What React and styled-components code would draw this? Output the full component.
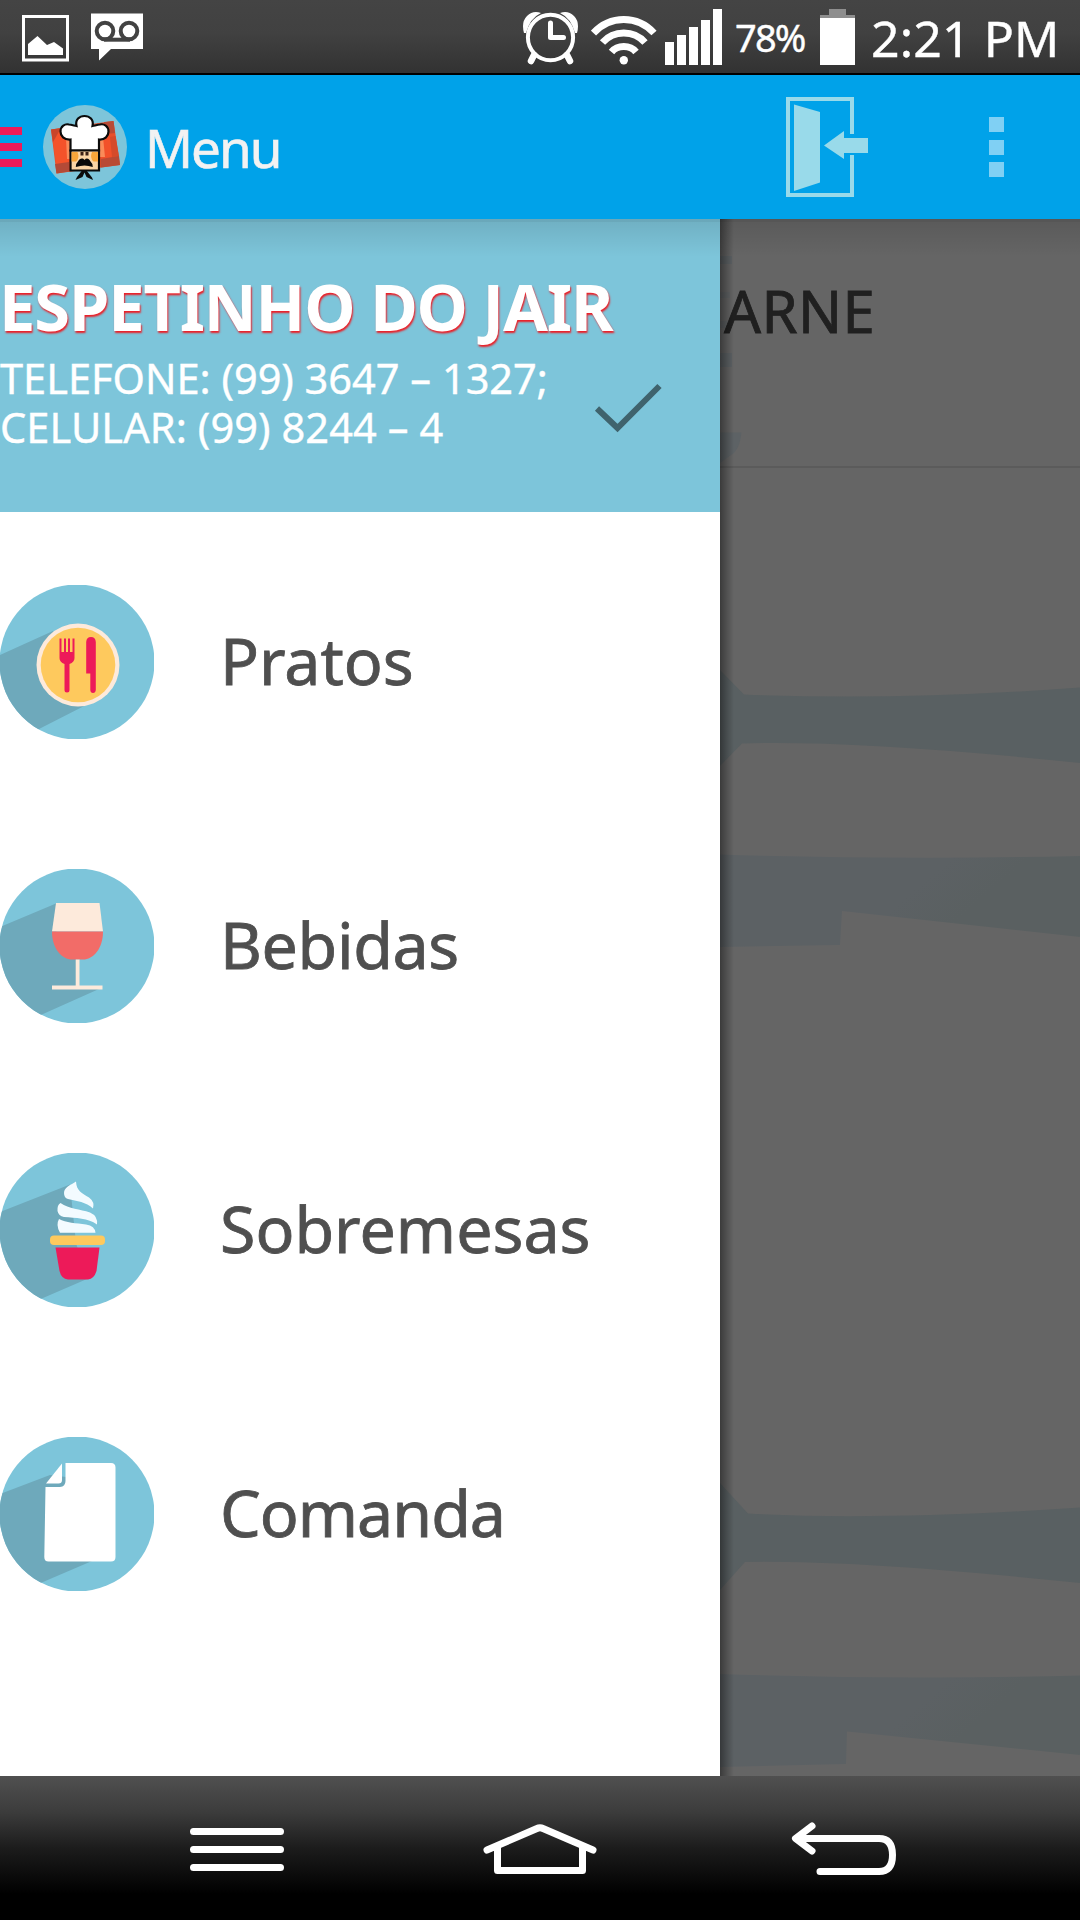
import React from "react";
import styled, { createGlobalStyle } from "styled-components";

const Global = createGlobalStyle`
  *, *::before, *::after { box-sizing: border-box; }
  body { margin: 0; background: #000; }
  svg { display: block; flex: none; }
`;

const Screen = styled.div`
  width: 1080px;
  height: 1920px;
  display: flex;
  flex-direction: column;
  overflow: hidden;
  font-family: "Noto Sans", "Open Sans", sans-serif;
`;

const StatusBar = styled.header`
  height: 75px;
  flex: none;
  display: flex;
  justify-content: space-between;
  padding: 0 22px;
  background: linear-gradient(#444 0%, #414141 45%, #323232 100%);
  border-bottom: 2px solid #000;
`;

const StatusGroup = styled.div`
  display: flex;
  align-items: flex-start;
`;

const StatusText = styled.span`
  font-size: ${(p) => p.$size}px;
  line-height: 60px;
  letter-spacing: ${(p) => p.$spacing}px;
  width: ${(p) => p.$width}px;
  padding-top: ${(p) => p.$top}px;
  margin-left: ${(p) => p.$left}px;
  white-space: nowrap;
  color: #fff;
  -webkit-text-stroke: 0.4px currentColor;
`;

const AppBar = styled.div`
  height: 144px;
  flex: none;
  display: flex;
  align-items: center;
  background: #00a2e9;
`;

const DrawerToggle = styled.div`
  display: grid;
  gap: 8px;
  width: 22px;
  margin-right: 21px;
`;

const ToggleLine = styled.span`
  height: 8px;
  background: #ed1a59;
`;

const AppTitle = styled.h1`
  flex: 1;
  margin: 0 0 0 18px;
  padding-top: 1px;
  font-size: 53px;
  line-height: 72px;
  font-weight: 400;
  letter-spacing: -2px;
  color: #f2f2f2;
  -webkit-text-stroke: 0.6px currentColor;
`;

const Overflow = styled.div`
  display: grid;
  gap: 7.5px;
  margin: 0 76px 0 121px;
`;

const OverflowDot = styled.span`
  width: 15px;
  height: 15px;
  background: #80d0f4;
`;

const Body = styled.main`
  height: 1557px;
  flex: none;
  display: grid;
  grid-template-columns: 720px 360px;
  position: relative;
`;

const BarShadow = styled.div`
  position: absolute;
  inset: 0 0 auto 0;
  height: 38px;
  background: linear-gradient(rgba(0, 0, 0, 0.15) 0 3px, rgba(0, 0, 0, 0.1) 3px, rgba(0, 0, 0, 0));
`;

const Drawer = styled.nav`
  background: #fff;
`;

const Account = styled.section`
  height: 293px;
  display: flex;
  background: #7dc5da;
`;

const AccountText = styled.div`
  width: 594px;
  padding-top: 45px;
  white-space: nowrap;
  color: #fff;
`;

const AccountName = styled.h2`
  margin: 0 0 0 -1px;
  font-size: 65px;
  line-height: 84px;
  font-weight: 700;
  letter-spacing: -1.15px;
  text-shadow: 1px 2px 2px #ee1c24;
`;

const Phone = styled.p`
  margin: 0;
  font-size: 41.5px;
  line-height: 49px;
  letter-spacing: ${(p) => p.$spacing}px;
  -webkit-text-stroke: 0.4px currentColor;
`;

const PhoneList = styled.div`
  padding-top: 6px;
`;

const CheckSlot = styled.div`
  padding-top: 161px;
`;

const Items = styled.div`
  display: grid;
  gap: 130px;
  padding-top: 73px;
`;

const Item = styled.div`
  height: 154px;
  display: flex;
  align-items: center;
  gap: 66px;
`;

const ItemLabel = styled.span`
  padding-bottom: 5px;
  font-size: 64.5px;
  line-height: 88px;
  letter-spacing: ${(p) => p.$spacing}px;
  color: #4f4f4f;
  -webkit-text-stroke: 0.8px currentColor;
`;

const DimPage = styled.section`
  position: relative;
  overflow: hidden;
  background: #656565;
`;

const Watermark = styled.svg`
  position: absolute;
  inset: 0;
`;

const PageHeading = styled.div`
  position: relative;
  height: 249px;
  padding: 50px 0 0 4px;
  border-bottom: 2px solid #5b5b5b;
  font-size: 58px;
  line-height: 84px;
  letter-spacing: 0.4px;
  color: #202020;
  -webkit-text-stroke: 0.8px currentColor;
`;

const DrawerShadow = styled.div`
  position: absolute;
  inset: 0 auto 0 0;
  width: 14px;
  background: linear-gradient(90deg, rgba(0, 0, 0, 0.42), rgba(0, 0, 0, 0.2) 50%, rgba(0, 0, 0, 0));
`;

const NavBar = styled.footer`
  height: 144px;
  flex: none;
  display: flex;
  align-items: flex-start;
  gap: 190px;
  padding: 44px 0 0 184px;
  background: linear-gradient(#505050 0%, #3c3c3c 25%, #1c1c1c 50%, #000 82%);
`;

const PhotoIcon = () => (
  <svg width="47" height="73" viewBox="22 0 47 73">
    <rect x="23.5" y="16.5" width="44" height="43.5" fill="none" stroke="#fff" strokeWidth="3" />
    <path d="M28 44L37.5 36L47 45L54 42L63 48.5V55H28Z" fill="#fff" />
  </svg>
);

const SpacedSvg = styled.svg`
  margin-left: ${(p) => p.$left}px;
`;

const VoicemailIcon = () => (
  <SpacedSvg $left={22} width="52" height="73" viewBox="91 0 52 73">
    <path d="M91 13.5H143V49H111L99 60.5V49H91Z" fill="#fff" />
    <g fill="none" stroke="#424242" strokeWidth="4">
      <circle cx="105" cy="31" r="8.3" />
      <circle cx="129" cy="31" r="8.3" />
      <path d="M104 39.7H130" />
    </g>
  </SpacedSvg>
);

const AlarmIcon = () => (
  <svg width="55" height="73" viewBox="523 0 55 73">
    <g fill="#fff">
      <path d="M524 33Q521 22 527 16Q533 10 541 13Q530 18 526 33Z" />
      <path d="M577 33Q580 22 574 16Q568 10 560 13Q571 18 575 33Z" />
    </g>
    <g fill="none" stroke="#fff" strokeLinecap="round">
      <ellipse cx="550.5" cy="37.5" rx="22.6" ry="22.8" strokeWidth="4" />
      <path d="M534 55L531 61M567 55L570 61" strokeWidth="6.5" />
      <path d="M550.5 23V37.5H563.5" strokeWidth="5" strokeLinejoin="round" />
    </g>
  </svg>
);

const WifiIcon = () => (
  <SpacedSvg $left={13} width="66" height="73" viewBox="591 0 66 73">
    <g fill="none" stroke="#fff" strokeWidth="7">
      <path d="M593.5 33Q606 19.5 623.8 19.5T654 33" />
      <path d="M602.5 42.5Q611 33 623.8 33T645 42.5" />
      <path d="M611.5 52Q616 46.5 623.8 46.5T636 52" />
    </g>
    <circle cx="623.8" cy="60.3" r="4.2" fill="#fff" />
  </SpacedSvg>
);

const SignalIcon = () => (
  <SpacedSvg $left={8} width="57" height="73" viewBox="665 0 57 73">
    <path fill="#fff" d="M665 42h9v23h-9zM677 35h9v30h-9zM689 27h9v38h-9zM701 20h9v45h-9zM713 9h9v56h-9z" />
  </SpacedSvg>
);

const BatteryIcon = () => (
  <svg width="35" height="73" viewBox="820 0 35 73">
    <path fill="#8e8e8e" d="M829 9h17v6h9v4h-35v-4h9z" />
    <path fill="#fff" d="M820 18h35v47h-35z" />
  </svg>
);

const ChefLogo = () => (
  <svg width="84" height="84" viewBox="43 105 84 84">
    <circle cx="85" cy="147" r="42" fill="#7dc5da" />
    <path d="M51 129.5L113.5 121L120 165L56.5 173.5Z" fill="#e8502b" />
    <path d="M51 129.5L61 128L63 141L53 143Z" fill="#c9452a" />
    <path d="M61 128L70 127V164L56.5 166L53 142Z" fill="#f4532a" />
    <path d="M101 138L110 137L113 157L101 158Z" fill="#f2512a" />
    <path d="M104 122L113.5 121L115 133L106 134Z" fill="#b84a35" />
    <path d="M110 137L115.500 136L119 156L112 157Z" fill="#d54b2b" />
    <path d="M55 164L69 162V171.500L56.5 173.500Z" fill="#b34a37" />
    <path d="M101 159L119 156L120 165L101 167.500Z" fill="#b94a34" />
    <path d="M66 138H70V159H67Z M100 137H103L105 157H100Z" fill="#fa8b59" />
    <path
      d="M70.500 150.500V139.500C64 140 60.500 136 60.500 131.500C60.500 126 65 123.500 69 124.500C71 124.800 74 125.500 76.500 126C75 119.500 79.500 116 84.500 116S94 119.500 92.500 126C95 125.500 98 124.800 100 124.500C104 123.500 108.500 126 108.500 131.500C108.500 136 105 140 99 139.500V150.500Z"
      fill="#fff"
      stroke="#0b0b0b"
      strokeWidth="2.200"
    />
    <path d="M70.500 150.500H99V170.500H70.500Z" fill="#fbd5a5" stroke="#0b0b0b" strokeWidth="2.200" />
    <path d="M71.600 152H77.500Q80 158 76 161.500H71.600ZM98 152H92Q89.500 158 93.500 161.500H98Z" fill="#f9a63a" />
    <path d="M80.500 152h3v3.500h-3zM85.500 152h3v3.500h-3z" fill="#3b2115" />
    <path d="M84.500 160C86.500 157.500 89 158.500 90.500 161.500Q92.500 163 92.800 167Q88.500 165.500 84.500 165.500T75.800 167Q76 163 78 161.500C79.500 158.500 82.500 157.500 84.500 160Z" fill="#090909" />
    <path d="M82 170.500H86.500L92 177.500L93 180L86.500 177L84.500 172.500L82.500 177L75.500 180L77 177Z" fill="#0b0b0b" />
  </svg>
);

const ExitIcon = () => (
  <svg width="82" height="100" viewBox="786 97 82 100">
    <path d="M852 134V99H788V195H852V155" fill="none" stroke="#99daea" strokeWidth="4" />
    <path d="M794 104.500L820 112V182.500L794 191Z" fill="#99daea" />
    <path d="M824 145.500L844 131V138H868V153H844V159Z" fill="#99daea" />
  </svg>
);

const CheckIcon = () => (
  <svg width="68" height="54" viewBox="594 380 68 54">
    <path d="M597 408.500L617.500 428L659.500 386" fill="none" stroke="#3f636d" strokeWidth="6" />
  </svg>
);

const Disc = ({ id, shadow, children }) => (
  <svg width="154" height="154" viewBox="0 0 154 154">
    <clipPath id={id}>
      <circle cx="77" cy="77" r="77.500" />
    </clipPath>
    <g clipPath={`url(#${id})`}>
      <path d="M0 0H154V154H0Z" fill="#7dc5da" />
      <path d={shadow} fill="#6ea9bb" />
      {children}
    </g>
  </svg>
);

const PlateIcon = () => (
  <Disc id="plate" shadow="M53 46L0 70V154H20L39 144L90 118Z">
    <circle cx="78" cy="80" r="41.500" fill="#fdeadb" />
    <circle cx="78" cy="80" r="37.300" fill="#fec95d" />
    <path d="M59.500 53.500H61.500V67H64V53.500H66V67H68V53.500H70V67H72.500V53.500H74.500V73Q74.500 77 69.500 79V105Q69.500 107.500 67 107.500T64.500 105V79Q59.500 77 59.500 73Z" fill="#ed1a59" />
    <path d="M86.200 57Q86.500 52 91 52T95.800 57V105Q95.500 108 93 108T90.300 105V88.500H86.200Z" fill="#ed1a59" />
  </Disc>
);

const WineIcon = () => (
  <Disc id="wine" shadow="M56 34.500L0 58V154H22L43 145L99 120H79V90L56 62Z">
    <path d="M56 34H99.500L103 62.500H52Z" fill="#fdeadb" />
    <path d="M52 62.500H103C103 80 93 90.500 83 90.500H72C62 90.500 52 80 52 62.500Z" fill="#f26c68" />
    <path d="M75.700 90.500H79.500V116.500H102.500V120.500H52V116.500H75.700Z" fill="#fdeadb" />
  </Disc>
);

const IceCreamIcon = () => (
  <Disc id="icecream" shadow="M70 31.500L0 59V154H22L43 145L87 126L76 90Z">
    <g fill="#f3fbff">
      <path d="M76 28.500C71 32 64 34 64 40Q64 45 68 46C77 48 86 49 93 55.500Q95 49 89 44.500C82 40 76.500 38 76 28.500Z" />
      <path d="M60.500 50Q57 52 57.500 58Q58.500 63 64 64C76 65 88 65 97 71.500Q98 63 90 59.500C80 56 69 56 60.500 50Z" />
      <path d="M59 66Q55.500 72 60 79.800H95.500Q95 73 86 71.500C76 70 66 70 59 66Z" />
    </g>
    <rect x="50" y="82.500" width="55" height="9.500" rx="4" fill="#fec95d" />
    <path d="M55.500 94.500H99.500L96.500 118Q94 126 88 126.500H68Q61.500 126 59.500 118Z" fill="#ed1a59" />
  </Disc>
);

const SheetIcon = () => (
  <Disc id="sheet" shadow="M50 38L0 57V154H22L43 145L92 124L66 40Z">
    <path d="M65.500 26H111Q115.500 26 115.500 30.500V120Q115.500 124.500 111 124.500H48.500Q44.300 124.500 44.300 120L45.500 50H60Q65.500 49.500 65.500 44Z" fill="#fff" />
    <path d="M62 26.500V43Q62 46.500 58.500 46.500H46Z" fill="#fff" />
  </Disc>
);

const MenuKey = () => (
  <svg width="108" height="60" viewBox="184 1820 108 60">
    <path d="M193.500 1831.500H280.500M193.500 1849.500H280.500M193.500 1867.500H280.500" stroke="#fff" strokeWidth="7" strokeLinecap="round" />
  </svg>
);

const HomeKey = () => (
  <svg width="117" height="60" viewBox="482 1820 117 60">
    <g fill="none" stroke="#fff" strokeWidth="7" strokeLinecap="round" strokeLinejoin="round">
      <path d="M487 1850L537 1828.500Q540 1827 543 1828.500L593 1850" />
      <path d="M497.500 1847V1870.500H582.500V1847" />
    </g>
  </svg>
);

const BackKey = () => (
  <svg width="110" height="60" viewBox="789 1820 110 60">
    <path
      d="M812 1826L795.500 1838.500L812 1851M797 1838.500H879Q892.500 1838.500 892.500 1855T879 1871.500H820"
      fill="none"
      stroke="#fff"
      strokeWidth="7"
      strokeLinecap="round"
      strokeLinejoin="round"
    />
  </svg>
);

const items = [
  { label: "Pratos", Icon: PlateIcon, spacing: 0 },
  { label: "Bebidas", Icon: WineIcon, spacing: -0.35 },
  { label: "Sobremesas", Icon: IceCreamIcon, spacing: 0 },
  { label: "Comanda", Icon: SheetIcon, spacing: -1 },
];

export default function App() {
  return (
    <Screen>
      <Global />
      <StatusBar>
        <StatusGroup>
          <PhotoIcon />
          <VoicemailIcon />
        </StatusGroup>
        <StatusGroup>
          <AlarmIcon />
          <WifiIcon />
          <SignalIcon />
          <StatusText $size={38} $spacing={-1.8} $width={85} $top={7} $left={13}>78%</StatusText>
          <BatteryIcon />
          <StatusText $size={50} $spacing={0.1} $width={187} $top={8} $left={16}>2:21 PM</StatusText>
        </StatusGroup>
      </StatusBar>
      <AppBar>
        <DrawerToggle>
          <ToggleLine />
          <ToggleLine />
          <ToggleLine />
        </DrawerToggle>
        <ChefLogo />
        <AppTitle>Menu</AppTitle>
        <ExitIcon />
        <Overflow>
          <OverflowDot />
          <OverflowDot />
          <OverflowDot />
        </Overflow>
      </AppBar>
      <Body>
        <Drawer>
          <Account>
            <AccountText>
              <AccountName>ESPETINHO DO JAIR</AccountName>
              <PhoneList>
                <Phone $spacing={0}>TELEFONE: (99) 3647 – 1327;</Phone>
                <Phone $spacing={0.1}>CELULAR: (99) 8244 – 4</Phone>
              </PhoneList>
            </AccountText>
            <CheckSlot>
              <CheckIcon />
            </CheckSlot>
          </Account>
          <Items>
            {items.map(({ label, Icon, spacing }) => (
              <Item key={label}>
                <Icon />
                <ItemLabel $spacing={spacing}>{label}</ItemLabel>
              </Item>
            ))}
          </Items>
        </Drawer>
        <DimPage>
          <Watermark width="360" height="1557" viewBox="720 219 360 1557">
            <defs>
              <linearGradient id="band" x1="0" y1="0" x2="1" y2="0.300">
                <stop offset="0.600" stopColor="#5c6164" />
                <stop offset="0.800" stopColor="#5a6061" />
              </linearGradient>
            </defs>
            <g fill="#5d6265">
              <path d="M720 256h12v8h-12zM720 353h12v14h-12z" />
              <path d="M720 292h10v6h-10zM720 321h8v7h-8z" opacity="0.600" />
              <path d="M720 432.500H741.500Q740 447 734 453Q727 458 720 463Z" />
            </g>
            <path d="M720 670L744 694.500Q900 701 1080 687.500V763Q860 740 742 743.500L720 766Z" fill="#596062" />
            <path d="M720 854.500Q900 860 1080 856V937L842 911L840 945L720 947Z" fill="url(#band)" />
            <path d="M720 1483L748 1513.500Q880 1521 1080 1507.500V1583Q860 1560 745 1562L720 1590Z" fill="#596062" />
            <path d="M720 1674Q900 1680 1080 1675.500V1755L847 1731.500L846 1764L720 1767Z" fill="url(#band)" />
          </Watermark>
          <PageHeading>ARNE</PageHeading>
          <DrawerShadow />
        </DimPage>
        <BarShadow />
      </Body>
      <NavBar>
        <MenuKey />
        <HomeKey />
        <BackKey />
      </NavBar>
    </Screen>
  );
}
